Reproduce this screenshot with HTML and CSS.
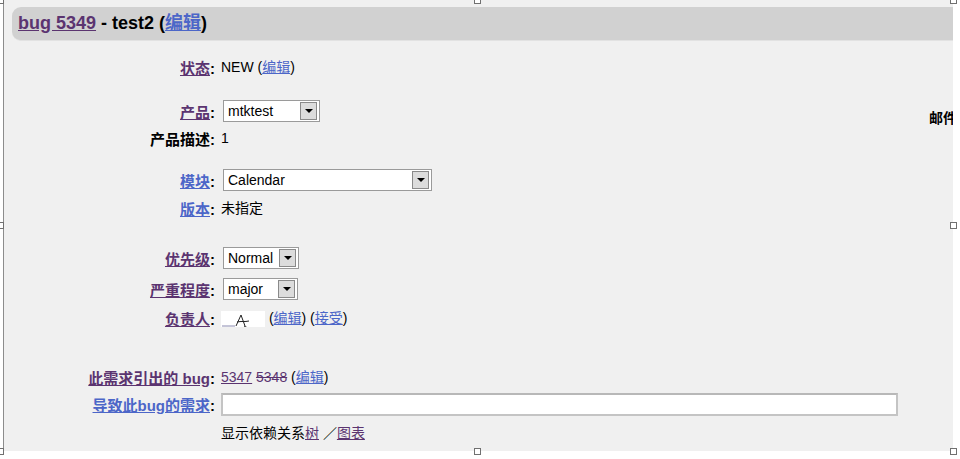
FILE: index.html
```html
<!DOCTYPE html>
<html>
<head>
  <meta charset="UTF-8">
  <title>bug 5349 - test2</title>
  <link rel="stylesheet" href="styles.css">
</head>
<body>
  <div class="sheet">
    <!-- 标题 -->
    <div class="titlebar">
      <a class="visited" href="#">bug 5349</a> - test2 (<a class="link" href="#">编辑</a>)
    </div>

    <div class="row r-status">
      <div class="label"><a class="visited" href="#">状态</a>:</div>
      <div class="value">NEW (<a class="link" href="#">编辑</a>)</div>
    </div>

    <div class="row r-product">
      <div class="label"><a class="visited" href="#">产品</a>:</div>
      <div class="value">
        <span class="combo w-product"><span class="combo-text">mtktest</span><span class="combo-btn"></span></span>
      </div>
      <div class="cc">邮件</div>
    </div>

    <div class="row r-desc">
      <div class="label plain">产品描述:</div>
      <div class="value">1</div>
    </div>

    <div class="row r-module">
      <div class="label"><a class="link" href="#">模块</a>:</div>
      <div class="value">
        <span class="combo w-module"><span class="combo-text">Calendar</span><span class="combo-btn"></span></span>
      </div>
    </div>

    <div class="row r-version">
      <div class="label"><a class="link" href="#">版本</a>:</div>
      <div class="value">未指定</div>
    </div>

    <div class="row r-priority">
      <div class="label"><a class="visited" href="#">优先级</a>:</div>
      <div class="value">
        <span class="combo w-priority"><span class="combo-text">Normal</span><span class="combo-btn"></span></span>
      </div>
    </div>

    <div class="row r-severity">
      <div class="label"><a class="visited" href="#">严重程度</a>:</div>
      <div class="value">
        <span class="combo w-severity"><span class="combo-text">major</span><span class="combo-btn"></span></span>
      </div>
    </div>

    <div class="row r-assignee">
      <div class="label"><a class="visited" href="#">负责人</a>:</div>
      <div class="value"><span class="redact"><svg width="44" height="16" viewBox="0 0 44 16">
            <path d="M1 15 H14" stroke="#8a8ab0" stroke-width="1" fill="none"/>
            <path d="M15 15 L20 4 L24 15 M16 11 C20 10 24 11 28 10 M23 15 L27 17" stroke="#222" stroke-width="1" fill="none"/>
          </svg></span> (<a class="link" href="#">编辑</a>) (<a class="link" href="#">接受</a>)</div>
    </div>

    <div class="row r-blocks">
      <div class="label"><a class="visited" href="#">此需求引出的 bug</a>:</div>
      <div class="value"><a class="visited" href="#">5347</a> <a class="closed" href="#">5348</a> (<a class="link" href="#">编辑</a>)</div>
    </div>

    <div class="row r-depends">
      <div class="label"><a class="link" href="#">导致此bug的需求</a>:</div>
      <div class="value">
        <input type="text" class="deps">
      </div>
    </div>

    <div class="row r-tree">
      <div class="label"></div>
      <div class="value">显示依赖关系<a class="visited" href="#">树</a> ／<a class="visited" href="#">图表</a></div>
    </div>
  </div>

  <!-- 选择框手柄 -->
  <span class="handle h-tl"></span>
  <span class="handle h-tm"></span>
  <span class="handle h-tr"></span>
  <span class="handle h-ml"></span>
  <span class="handle h-mr"></span>
  <span class="handle h-bl"></span>
  <span class="handle h-bm"></span>
  <span class="handle h-br"></span>
</body>
</html>
```

FILE: styles.css
```css
body {
  margin: 0;
  background: #fff;
  font-family: "Liberation Sans", "Noto Sans CJK SC", sans-serif;
  font-size: 14px;
  color: #000;
  position: relative;
  width: 960px;
  height: 459px;
  overflow: hidden;
}

.sheet {
  margin-left: 3px;
  width: 950px;
  height: 451px;
  background: #f0f0f0;
  border-left: 1px solid #8c8c8c;
  box-sizing: border-box;
  overflow: hidden;
  padding-top: 7px;
}

.titlebar {
  margin-left: 8px;
  height: 33px;
  line-height: 33px;
  background: #d1d1d1;
  border-radius: 9px 0 0 9px;
  padding-left: 6px;
  font-size: 18px;
  font-weight: bold;
  border-bottom: 1px solid #e2e2e2;
}

a.visited { color: #5b3470; text-decoration: underline; }
a.link { color: #4c66c8; text-decoration: underline; }
a.closed { color: #5b3470; text-decoration: line-through; }

.row {
  display: flex;
  align-items: center;
  height: 22px;
}
.label {
  width: 211px;
  flex-shrink: 0;
  text-align: right;
  font-weight: bold;
  font-size: 15px;
  white-space: nowrap;
}
.label.plain { color: #000; }
.value {
  padding-left: 6px;
  white-space: nowrap;
  line-height: 22px;
}

.r-status   { margin-top: 15px; }
.r-product  { margin-top: 22px; }
.r-desc     { margin-top: 5px; }
.r-module   { margin-top: 20px; }
.r-version  { margin-top: 6px; }
.r-priority { margin-top: 28px; }
.r-severity { margin-top: 9px; }
.r-assignee { margin-top: 7px; }
.r-blocks   { margin-top: 37px; }
.r-depends  { margin-top: 5px; }
.r-tree     { margin-top: 7px; }

.cc {
  margin-left: auto;
  margin-right: -4px;
  margin-top: 12px;
  font-weight: bold;
  white-space: nowrap;
}

/* 下拉框 */
.combo {
  display: inline-flex;
  vertical-align: top;
  margin-left: 2px;
  height: 22px;
  box-sizing: border-box;
  border: 1px solid #9a9a9a;
  background: #fff;
  align-items: center;
}
.combo-text {
  flex: 1;
  padding-left: 4px;
  line-height: 18px;
}
.combo-btn {
  width: 15px;
  height: 16px;
  margin-right: 2px;
  border: 1px solid #8a8a8a;
  background: #dcdcdc;
  position: relative;
}
.combo-btn::after {
  content: "";
  position: absolute;
  left: 4px;
  top: 6px;
  border-left: 4px solid transparent;
  border-right: 4px solid transparent;
  border-top: 4px solid #000;
}
.w-product  { width: 97px; }
.w-module   { width: 209px; }
.w-priority { width: 76px; }
.w-severity { width: 75px; }

.redact {
  display: inline-block;
  vertical-align: middle;
  width: 44px;
  height: 16px;
  background: #fff;
}
.redact svg { display: block; }

.deps {
  display: block;
  width: 677px;
  height: 23px;
  box-sizing: border-box;
  margin: 0;
  border: 2px solid #c4c4c4;
  border-top-color: #b8b8b8;
  background: #fff;
}

/* 选择框手柄 */
.handle {
  position: absolute;
  width: 7px;
  height: 7px;
  box-sizing: border-box;
  border: 1px solid #707070;
  background: #fff;
}
.h-tl { left: -3px; top: -3px; }
.h-tm { left: 474px; top: -3px; }
.h-tr { left: 950px; top: -3px; }
.h-ml { left: -3px; top: 222px; }
.h-mr { left: 950px; top: 222px; }
.h-bl { left: -3px; top: 448px; }
.h-bm { left: 474px; top: 448px; }
.h-br { left: 950px; top: 448px; }
```
